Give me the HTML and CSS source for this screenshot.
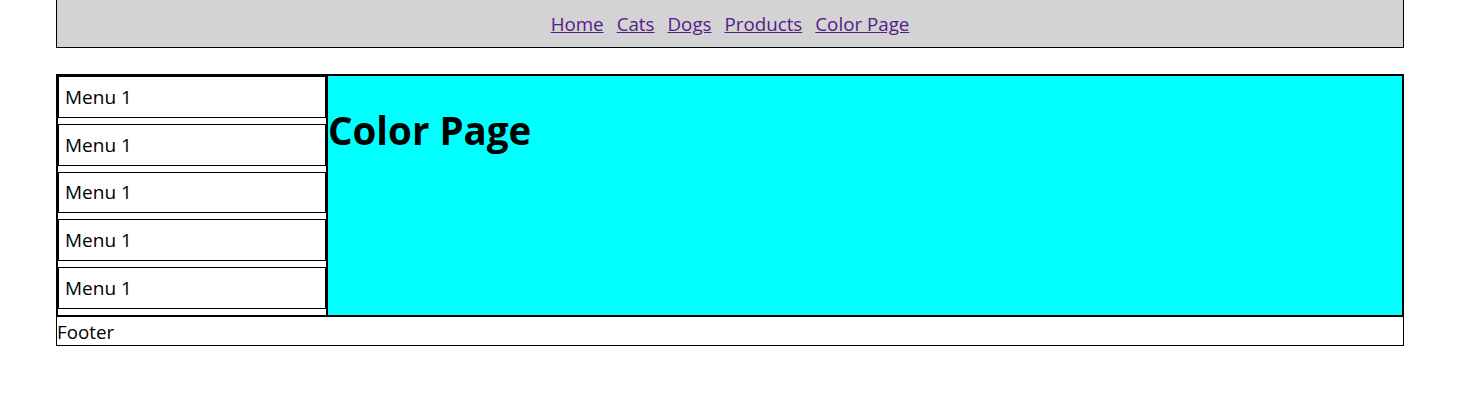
FILE: index.html
```html
<!DOCTYPE html>
<html lang="en">
<head>
<meta charset="utf-8">
<title>Color Page</title>
<link rel="stylesheet" href="styles.css">
</head>
<body>
<div class="page">
  <header class="site-header">
    <nav class="top-nav">
      <a href="#" class="nav-link">Home</a>
      <a href="#" class="nav-link">Cats</a>
      <a href="#" class="nav-link">Dogs</a>
      <a href="#" class="nav-link">Products</a>
      <a href="#" class="nav-link">Color Page</a>
    </nav>
  </header>
  <main class="main-box">
    <aside class="sidebar">
      <div class="menu-item">Menu 1</div>
      <div class="menu-item">Menu 1</div>
      <div class="menu-item">Menu 1</div>
      <div class="menu-item">Menu 1</div>
      <div class="menu-item">Menu 1</div>
    </aside>
    <section class="content">
      <h1 class="title">Color Page</h1>
    </section>
  </main>
  <footer class="site-footer">Footer</footer>
</div>
</body>
</html>
```

FILE: styles.css
```css
html, body {
  margin: 0;
  padding: 0;
  background: #ffffff;
}

body {
  font-family: "Open Sans", "Noto Sans", sans-serif;
  font-size: 18.75px;
  color: #000000;
}

.page {
  width: 1348px;
  margin-left: 56px;
}

.site-header {
  box-sizing: border-box;
  height: 48px;
  background: #d3d3d3;
  border: 1px solid #000000;
  border-top: none;
  display: flex;
  align-items: center;
  justify-content: center;
  padding-bottom: 1px;
}

.top-nav {
  display: flex;
  gap: 13px;
}

.nav-link {
  color: #551a8b;
  text-decoration: underline;
  font-size: 18.75px;
}

.main-box {
  display: flex;
  margin-top: 26px;
  border: 2px solid #000000;
  height: 239px;
}

.sidebar {
  width: 268px;
  flex: none;
  border-right: 2px solid #000000;
  display: flex;
  flex-direction: column;
  gap: 6px;
}

.menu-item {
  box-sizing: border-box;
  height: 41.75px;
  border: 1px solid #000000;
  padding-left: 6px;
  display: flex;
  align-items: center;
  font-size: 19px;
}

.content {
  flex: 1;
  background: #00ffff;
}

.title {
  margin: 31px 0 0;
  font-size: 38.5px;
  font-weight: 700;
  line-height: 1.2;
}

.site-footer {
  box-sizing: border-box;
  height: 29px;
  border: 1px solid #000000;
  border-top: none;
  font-size: 18.75px;
  line-height: 30px;
}
```
